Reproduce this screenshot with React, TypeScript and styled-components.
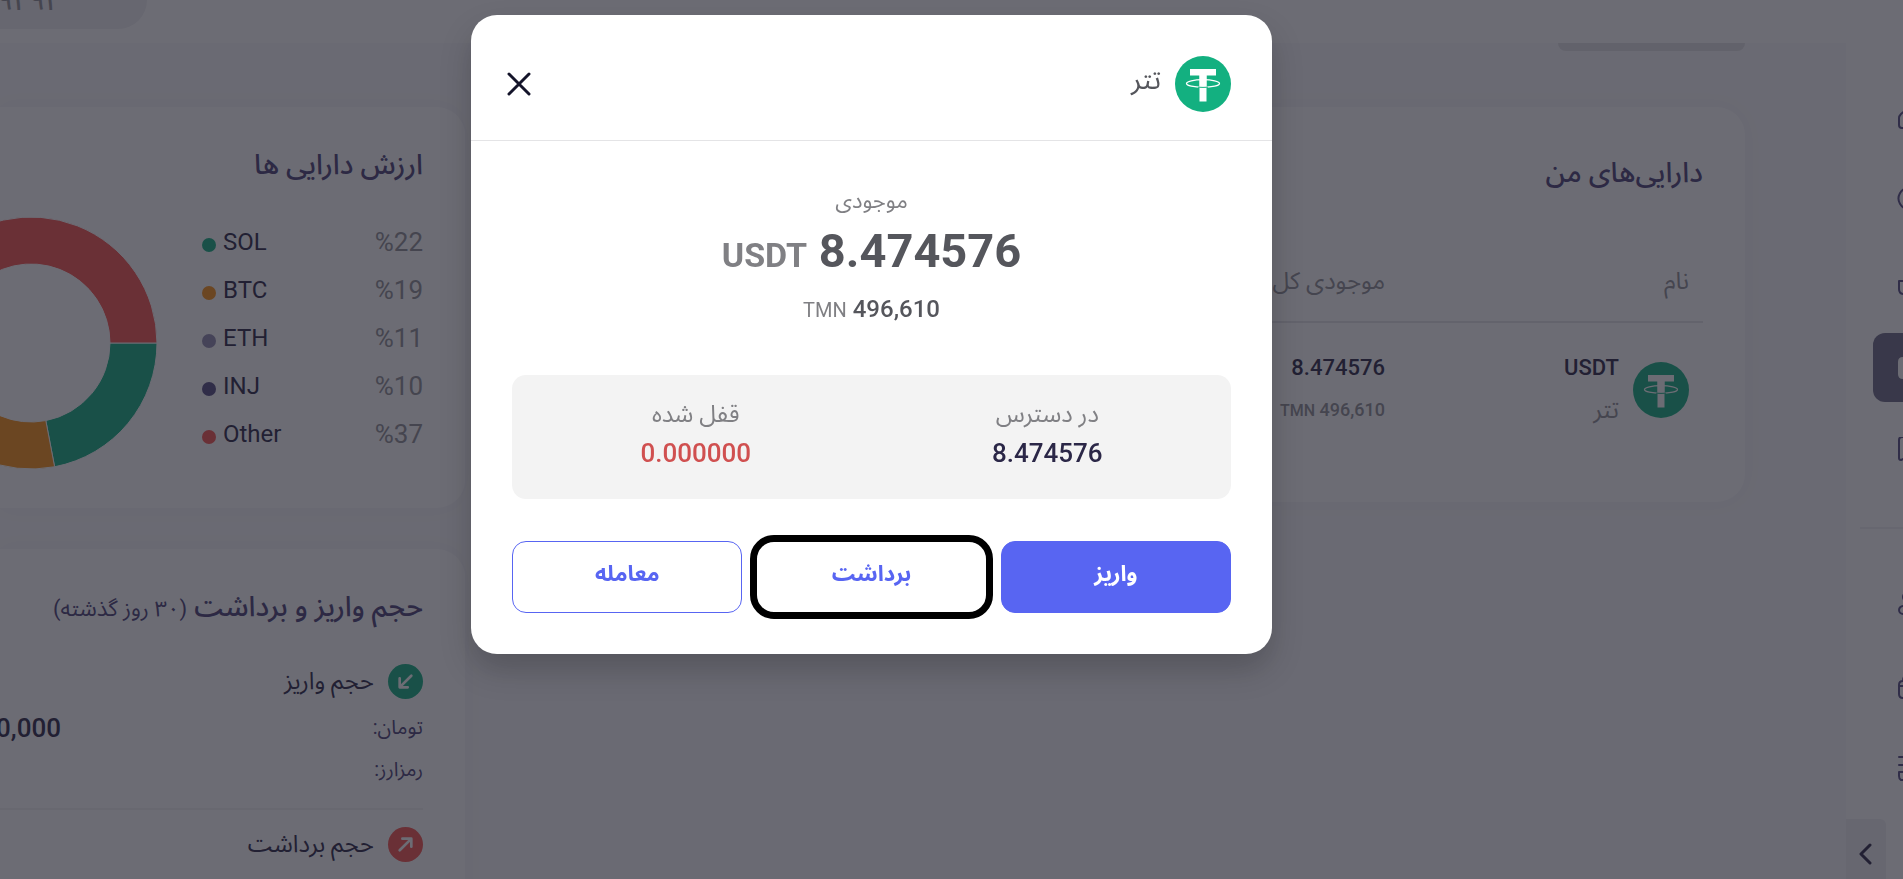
import React from "react";
import styled, { createGlobalStyle, css } from "styled-components";

const GlobalStyle = createGlobalStyle`
  *, *::before, *::after { box-sizing: border-box; }
  html, body { margin: 0; height: 100%; overflow: hidden; }
  body {
    background: #f9f9fb;
    color: #4a4176;
    font-family: Roboto, "Noto Sans Arabic", "DejaVu Sans", sans-serif;
    font-size: 20px;
  }
  h1, h2, p, ul, dl, dd, dt { margin: 0; padding: 0; font-weight: 400; }
  ul { list-style: none; }
  button { font: inherit; cursor: pointer; }
`;

const Page = styled.div`
  display: flex;
  flex-direction: column;
  height: 100vh;
  overflow: hidden;
`;

const TopBar = styled.header`
  display: flex;
  justify-content: flex-end;
  flex: none;
  height: 43px;
  background: #fff;
`;

const PhonePill = styled.div`
  display: flex;
  align-items: flex-end;
  width: 147px;
  height: 29px;
  padding: 0 86px 16px 0;
  border-bottom-right-radius: 29px;
  background: #f0f0f2;
  color: #8f8f95;
  font-size: 28px;
  font-weight: 500;
  line-height: 24px;
`;

const Body = styled.div`
  display: flex;
  flex: 1;
  min-height: 0;
`;

const Sidebar = styled.nav`
  display: flex;
  flex-direction: column;
  flex: none;
  direction: ltr;
  width: 57px;
  padding-top: 41px;
  background: #fff;
  overflow: hidden;
`;

const NavList = styled.ul`
  display: flex;
  flex-direction: column;
  gap: 14px;
  padding-left: 27px;
`;

const NavItem = styled.a<{ $active?: boolean }>`
  display: flex;
  align-items: center;
  width: 230px;
  height: 69px;
  padding-left: 24px;
  border-radius: 12px;
  color: ${(p) => (p.$active ? "#ffffff" : "#534a82")};
  background: ${(p) => (p.$active ? "#6e6c86" : "transparent")};
`;

const NavDivider = styled.hr`
  flex: none;
  width: 200px;
  height: 2px;
  margin: 42px 0 39px 14px;
  border: 0;
  background: #efeff2;
`;

const CollapseButton = styled.button`
  display: flex;
  align-items: center;
  justify-content: center;
  flex: none;
  width: 40px;
  height: 70px;
  margin-top: auto;
  margin-bottom: -10px;
  padding: 0;
  border: 0;
  border-top-right-radius: 6px;
  background: #f0f0f2;
  color: #2b2747;
`;

const Main = styled.main`
  display: flex;
  flex: 1;
  gap: 34px;
  min-width: 0;
  padding-right: 101px;
`;

const AssetsColumn = styled.div`
  display: flex;
  flex-direction: column;
  flex: 1;
  min-width: 0;
`;

const SideColumn = styled.div`
  display: flex;
  flex-direction: column;
  flex: none;
  gap: 41px;
  width: 465px;
  padding-top: 64px;
`;

const Segment = styled.div`
  width: 187px;
  height: 8px;
  margin-bottom: 56px;
  border-radius: 0 0 8px 8px;
  background: #e2e2e4;
`;

const Card = styled.section<{ $open?: boolean; $height: number; $top: number }>`
  min-height: ${(p) => p.$height}px;
  padding: ${(p) => p.$top}px 42px 0 ${(p) => (p.$open ? 0 : 42)}px;
  background: #fff;
  border-radius: ${(p) => (p.$open ? "0 28px 28px 0" : "28px")};
  box-shadow: 0 0 24px rgba(40, 40, 60, 0.03);
  overflow: hidden;
`;

const CardTitle = styled.h2`
  font-size: 28px;
  font-weight: 500;
  line-height: 36px;
  white-space: nowrap;

  small { font-size: 22px; font-weight: 400; }
`;

const Table = styled.table`
  width: 100%;
  margin-top: 66px;
  border-collapse: collapse;
  table-layout: fixed;
`;

const HeadCell = styled.th<{ $width?: number }>`
  width: ${(p) => (p.$width ? `${p.$width}px` : "auto")};
  height: 65px;
  padding: 0 14px 16px;
  border-bottom: 2px solid #e4e4e8;
  color: #909096;
  font-size: 24px;
  font-weight: 400;
  line-height: 36px;
  text-align: right;
`;

const Cell = styled.td`
  padding: 29px 14px;
  vertical-align: top;
`;

const Coin = styled.div`
  display: flex;
  align-items: flex-end;
  gap: 14px;

  svg { margin-bottom: 8px; }
`;

const Stack = styled.div`
  display: flex;
  flex-direction: column;
  gap: 10px;
  line-height: 32px;
`;

const Strong = styled.span<{ $large?: boolean }>`
  color: #2b2747;
  font-size: ${(p) => (p.$large ? 26 : 22)}px;
  font-weight: 500;
`;

const Muted = styled.span<{ $large?: boolean }>`
  color: #909096;
  font-size: ${(p) => (p.$large ? 24 : 18)}px;

  b { font-weight: 500; }
  small { font-size: 16px; font-weight: 500; }
`;

const ValueSplit = styled.div`
  display: flex;
  gap: 46px;
  margin-top: 35px;
`;

const Legend = styled.ul`
  flex: none;
  width: 221px;
`;

const LegendItem = styled.li`
  display: flex;
  flex-direction: row-reverse;
  align-items: center;
  height: 48px;
  color: #2b2747;
  font-size: 24px;
`;

const Dot = styled.i<{ $color: string }>`
  width: 14px;
  height: 14px;
  margin-top: 6px;
  margin-right: 7px;
  border-radius: 50%;
  background: ${(p) => p.$color};
`;

const Percent = styled.span`
  margin-left: auto;
  color: #909096;
  font-size: 26px;
`;

const Donut = styled.svg`
  flex: none;
  width: 250px;
  height: 250px;
  overflow: visible;
`;

const VolumeHead = styled.div`
  display: flex;
  align-items: center;
  gap: 14px;
  height: 35px;
  margin-bottom: 8px;
  color: #2b2747;
  font-size: 24px;
`;

const VolumeBadge = styled.span<{ $color: string }>`
  display: grid;
  place-items: center;
  width: 35px;
  height: 35px;
  border-radius: 50%;
  background: ${(p) => p.$color};
  color: #fff;
`;

const VolumeRow = styled.div`
  display: grid;
  grid-template-columns: 362px 1fr;
  align-items: center;
  height: 42px;
  white-space: nowrap;
`;

const VolumeBlock = styled.div`
  margin: 37px 0 17px;
  padding-bottom: 17px;
  border-bottom: 2px solid #f2f2f4;
`;

const Overlay = styled.div`
  position: fixed;
  inset: 0;
  display: flex;
  justify-content: center;
  align-items: flex-start;
  padding: 15px 160px 0 0;
  background: rgba(29, 29, 41, 0.65);
`;

const Modal = styled.div`
  width: 801px;
  border-radius: 26px;
  background: #fff;
  box-shadow: 0 16px 32px rgba(0, 0, 0, 0.2);
  color: #55565c;
`;

const ModalHeader = styled.header`
  display: flex;
  align-items: center;
  justify-content: space-between;
  padding: 41px 41px 28px 36px;
  border-bottom: 1px solid #e4e4e6;
`;

const ModalCoin = styled.h1`
  display: flex;
  align-items: center;
  gap: 14px;
  font-size: 28px;
  line-height: 56px;

  span { padding-bottom: 8px; line-height: 48px; }
`;

const CloseButton = styled.button`
  display: grid;
  place-items: center;
  padding: 0;
  border: 0;
  background: none;
  color: #14142a;
`;

const ModalBody = styled.div`
  display: flex;
  flex-direction: column;
  padding: 44px 41px 41px;
`;

const Balance = styled.div`
  display: flex;
  flex-direction: column;
  align-items: center;
`;

const BalanceLabel = styled.p`
  color: #808084;
  font-size: 22px;
  line-height: 32px;
`;

const Amount = styled.p`
  font-size: 47px;
  font-weight: 700;
  line-height: 68px;
  direction: ltr;

  small { color: #808084; font-size: 34px; }
`;

const Fiat = styled.p`
  font-size: 24px;
  font-weight: 500;
  line-height: 40px;
  direction: ltr;

  small { color: #808084; font-size: 20px; font-weight: 400; }
`;

const Breakdown = styled.dl`
  display: grid;
  grid-template-columns: 1fr 1fr;
  margin: 45px 0 42px;
  padding: 21px 8px 25px;
  border-radius: 14px;
  background: #f3f3f3;
  text-align: center;
`;

const BreakLabel = styled.dt`
  color: #808084;
  font-size: 24px;
  line-height: 36px;
`;

const BreakValue = styled.dd<{ $danger?: boolean }>`
  color: ${(p) => (p.$danger ? "#d05050" : "#2b2747")};
  font-size: 26px;
  font-weight: 500;
  line-height: 42px;
`;

const Actions = styled.div`
  display: grid;
  grid-template-columns: repeat(3, 1fr);
  gap: 14px;
`;

const ActionButton = styled.button<{ $primary?: boolean; $marked?: boolean }>`
  position: relative;
  height: 72px;
  padding: 0 0 6px;
  border: 1px solid #5865f2;
  border-radius: 14px;
  background: ${(p) => (p.$primary ? "#5865f2" : "#fff")};
  color: ${(p) => (p.$primary ? "#fff" : "#5865f2")};
  font-size: 22px;
  font-weight: 700;

  ${(p) =>
    p.$marked &&
    css`
      &::after {
        content: "";
        position: absolute;
        inset: -7px;
        border: 7px solid #000;
        border-radius: 24px;
      }
    `}
`;

const Tether = () => (
  <svg width="56" height="56" viewBox="0 0 56 56" aria-hidden="true">
    <circle cx="28" cy="28" r="28" fill="#13b080" />
    <path d="M15 13h26v6.500h-9.500v26h-7v-26H15z" fill="#fff" />
    <ellipse cx="28" cy="27.500" rx="16.500" ry="3.800" fill="none" stroke="#fff" strokeWidth="1.300" />
    <path d="M24.500 19h7v11.500h-7z" fill="#fff" />
    <path d="M23 31.200q5 .4 10 0" stroke="#13b080" strokeWidth="1" fill="none" />
  </svg>
);

const NavIcon = ({ d, filled }: { d: string; filled?: boolean }) => (
  <svg
    width="28"
    height="28"
    viewBox="0 0 28 28"
    fill={filled ? "currentColor" : "none"}
    stroke="currentColor"
    strokeWidth="2"
    strokeLinecap="round"
    strokeLinejoin="round"
    aria-hidden="true"
  >
    <path d={d} />
  </svg>
);

const primaryNav = [
  { label: "خانه", d: "M9 23H5q-3 0-3-3v-7q0-2 2-4l8-7 8 7q2 2 2 4v7q0 3-3 3z" },
  { label: "بازار", d: "M12 0a10.500 10.500 0 1 0 .1 0z" },
  { label: "معامله", d: "M2 10h22M2 10v8q0 5 5 5h12" },
  { label: "کیف پول", d: "M6 4h16v20H6q-4 0-4-4V8q0-4 4-4z", filled: true },
  { label: "سفارش‌ها", d: "M5 0h14v21l-5 2-5-2-5 2q-2 0-2-2V3q0-3 3-3z" },
];

const secondaryNav = [
  { label: "معرفی", d: "M11 3a5 5 0 1 0 .1 0zM6 17a4 4 0 1 0 .1 8h14" },
  { label: "جوایز", d: "M6 9h16v17H6q-4 0-4-4v-9q0-4 4-4zM2 14h20M6 9q0-6 6-7" },
  { label: "خدمات", d: "M2 2h16M2 10h16M2 17h5v8H4q-2-1-2-4z" },
];

const shares = [
  { name: "SOL", value: 22, color: "#12b081" },
  { name: "BTC", value: 19, color: "#fb9215" },
  { name: "ETH", value: 11, color: "#918baf" },
  { name: "INJ", value: 10, color: "#534a82" },
  { name: "Other", value: 37, color: "#f9534e" },
];

const slicePath = (from: number, to: number) => {
  const at = (r: number, a: number) => `${125 + r * Math.cos(a)} ${125 + r * Math.sin(a)}`;
  const large = to - from > Math.PI ? 1 : 0;
  return `M${at(126, from)}A126 126 0 ${large} 1 ${at(126, to)}L${at(79, to)}A79 79 0 ${large} 0 ${at(79, from)}Z`;
};

const ShareChart = () => {
  let angle = 0;
  return (
    <Donut viewBox="0 0 250 250" aria-hidden="true">
      {shares.map((s, i) => {
        const from = angle;
        angle = i === shares.length - 1 ? Math.PI * 2 : angle + (s.value / 100) * Math.PI * 2;
        return <path key={s.name} d={slicePath(from, angle)} fill={s.color} stroke="#fff" strokeWidth="1" />;
      })}
    </Donut>
  );
};

const Arrow = ({ up }: { up?: boolean }) => (
  <svg width="17" height="17" viewBox="0 0 19 19" fill="none" stroke="currentColor" strokeWidth="3" strokeLinecap="round" strokeLinejoin="round" aria-hidden="true">
    <path d={up ? "M3 16 15 4M6 3h10v9" : "M16 3 4 15M3 6v10h9"} />
  </svg>
);

export default function App() {
  return (
    <>
      <GlobalStyle />
      <Page dir="rtl" lang="fa">
        <TopBar>
          <PhonePill>۷۹۴۹۴</PhonePill>
        </TopBar>
        <Body>
          <Sidebar>
            <NavList>
              {primaryNav.map((n) => (
                <li key={n.label}>
                  <NavItem href="#" aria-label={n.label} $active={n.filled}>
                    <NavIcon d={n.d} filled={n.filled} />
                  </NavItem>
                </li>
              ))}
            </NavList>
            <NavDivider />
            <NavList>
              {secondaryNav.map((n) => (
                <li key={n.label}>
                  <NavItem href="#" aria-label={n.label}>
                    <NavIcon d={n.d} />
                  </NavItem>
                </li>
              ))}
            </NavList>
            <CollapseButton aria-label="بستن منو">
              <svg width="14" height="22" viewBox="0 0 14 22" fill="none" stroke="currentColor" strokeWidth="3" strokeLinecap="round" strokeLinejoin="round">
                <path d="M11 2 2 11l9 9" />
              </svg>
            </CollapseButton>
          </Sidebar>
          <Main>
            <AssetsColumn>
              <Segment />
              <Card $height={395} $top={48}>
                <CardTitle>دارایی‌های من</CardTitle>
                <Table>
                  <thead>
                    <tr>
                      <HeadCell $width={304}>نام</HeadCell>
                      <HeadCell>موجودی کل</HeadCell>
                    </tr>
                  </thead>
                  <tbody>
                    <tr>
                      <Cell>
                        <Coin>
                          <Tether />
                          <Stack>
                            <Strong>USDT</Strong>
                            <Muted $large>تتر</Muted>
                          </Stack>
                        </Coin>
                      </Cell>
                      <Cell>
                        <Stack>
                          <Strong>8.474576</Strong>
                          <Muted>
                            <b>496,610</b> <small>TMN</small>
                          </Muted>
                        </Stack>
                      </Cell>
                    </tr>
                  </tbody>
                </Table>
              </Card>
            </AssetsColumn>
            <SideColumn>
              <Card $open $height={401} $top={40}>
                <CardTitle>ارزش دارایی ها</CardTitle>
                <ValueSplit>
                  <Legend>
                    {shares.map((s) => (
                      <LegendItem key={s.name}>
                        <Dot $color={s.color} />
                        <span>{s.name}</span>
                        <Percent dir="ltr">%{s.value}</Percent>
                      </LegendItem>
                    ))}
                  </Legend>
                  <ShareChart />
                </ValueSplit>
              </Card>
              <Card $open $height={400} $top={40}>
                <CardTitle>
                  حجم واریز و برداشت <small>(۳۰ روز گذشته)</small>
                </CardTitle>
                <VolumeBlock>
                  <VolumeHead>
                    <VolumeBadge $color="#12b081">
                      <Arrow />
                    </VolumeBadge>
                    حجم واریز
                  </VolumeHead>
                  <VolumeRow>
                    <span>تومان:</span>
                    <Strong $large>0,000</Strong>
                  </VolumeRow>
                  <VolumeRow>
                    <span>رمزارز:</span>
                  </VolumeRow>
                </VolumeBlock>
                <VolumeHead>
                  <VolumeBadge $color="#f9534e">
                    <Arrow up />
                  </VolumeBadge>
                  حجم برداشت
                </VolumeHead>
              </Card>
            </SideColumn>
          </Main>
        </Body>
        <Overlay>
          <Modal role="dialog" aria-modal="true" aria-label="تتر">
            <ModalHeader>
              <ModalCoin>
                <Tether />
                <span>تتر</span>
              </ModalCoin>
              <CloseButton aria-label="بستن">
                <svg width="24" height="24" viewBox="0 0 24 24" stroke="currentColor" strokeWidth="3" strokeLinecap="round">
                  <path d="M2 2l20 20M22 2 2 22" />
                </svg>
              </CloseButton>
            </ModalHeader>
            <ModalBody>
              <Balance>
                <BalanceLabel>موجودی</BalanceLabel>
                <Amount>
                  <small>USDT</small> 8.474576
                </Amount>
                <Fiat>
                  <small>TMN</small> 496,610
                </Fiat>
              </Balance>
              <Breakdown>
                <div>
                  <BreakLabel>در دسترس</BreakLabel>
                  <BreakValue>8.474576</BreakValue>
                </div>
                <div>
                  <BreakLabel>قفل شده</BreakLabel>
                  <BreakValue $danger>0.000000</BreakValue>
                </div>
              </Breakdown>
              <Actions>
                <ActionButton $primary>واریز</ActionButton>
                <ActionButton $marked>برداشت</ActionButton>
                <ActionButton>معامله</ActionButton>
              </Actions>
            </ModalBody>
          </Modal>
        </Overlay>
      </Page>
    </>
  );
}
